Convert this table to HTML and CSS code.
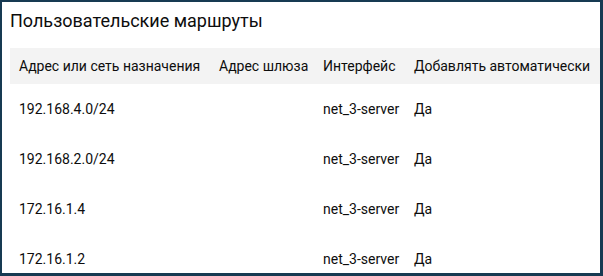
FILE: index.html
```html
<!DOCTYPE html>
<html lang="ru">
<head>
<meta charset="utf-8">
<title>Пользовательские маршруты</title>
<link rel="stylesheet" href="styles.css">
</head>
<body>
<div class="frame">
  <h1 class="title">Пользовательские маршруты</h1>
  <table class="routes">
    <colgroup>
      <col class="c1"><col class="c2"><col class="c3"><col class="c4">
    </colgroup>
    <thead>
      <tr>
        <th>Адрес или сеть назначения</th>
        <th>Адрес шлюза</th>
        <th>Интерфейс</th>
        <th>Добавлять автоматически</th>
      </tr>
    </thead>
    <tbody>
      <tr><td>192.168.4.0/24</td><td></td><td>net_3-server</td><td>Да</td></tr>
      <tr><td>192.168.2.0/24</td><td></td><td>net_3-server</td><td>Да</td></tr>
      <tr><td>172.16.1.4</td><td></td><td>net_3-server</td><td>Да</td></tr>
      <tr><td>172.16.1.2</td><td></td><td>net_3-server</td><td>Да</td></tr>
    </tbody>
  </table>
</div>
</body>
</html>
```

FILE: styles.css
```css
* { box-sizing: border-box; }
html, body { margin: 0; padding: 0; background: #fff; }
body { font-family: Roboto, "Noto Sans", sans-serif; color: #0d0d0d; }
.frame {
  width: 603px;
  height: 276px;
  overflow: hidden;
  border-style: solid;
  border-color: #173a52;
  border-width: 2px 3px 3px 2px;
  padding: 7px 0 0 8px;
  background: #fff;
}
.title {
  margin: 0;
  font-size: 18px;
  line-height: 24px;
  font-weight: 400;
  color: #0d0d0d;
}
.routes {
  margin-top: 15px;
  width: 590px;
  border-collapse: collapse;
  table-layout: fixed;
  font-size: 14px;
  line-height: 20px;
}
.c1 { width: 200px; }
.c2 { width: 104px; }
.c3 { width: 91px; }
.c4 { width: 195px; }
.routes th {
  background: #f3f3f3;
  font-weight: 400;
  text-align: left;
  height: 36px;
  padding: 0 7px 0 9px;
  white-space: nowrap;
}
.routes td {
  height: 50px;
  padding: 0 7px 0 9px;
  white-space: nowrap;
}
```
